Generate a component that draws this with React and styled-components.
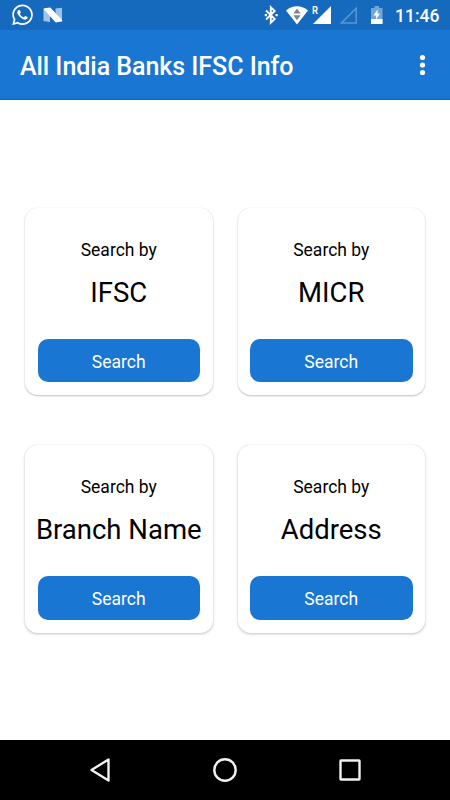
import React from "react";
import styled, { createGlobalStyle } from "styled-components";
import { FaWhatsapp } from "react-icons/fa";

const GlobalStyle = createGlobalStyle`
  * { box-sizing: border-box; }
  body { margin: 0; background: #fff; font-family: Roboto, sans-serif; overflow: hidden; }
`;

const Screen = styled.div`
  width: 450px;
  height: 800px;
  display: flex;
  flex-direction: column;
  background: #fff;
`;

const StatusBar = styled.header`
  height: 30px;
  flex: none;
  display: flex;
  align-items: flex-start;
  padding: 0 10px 0 12px;
  background: #166abd;
  color: #fff;
`;

const StatusIcon = styled.svg`
  display: block;
  flex: none;
  width: ${(p) => p.$w}px;
  height: 30px;
  margin-left: ${(p) => p.$gap || 0}px;
`;

const WhatsApp = styled(FaWhatsapp)`
  display: block;
  flex: none;
  width: 21px;
  height: 23.6px;
  margin-top: 3px;
`;

const Spacer = styled.div`
  flex: 1;
`;

const Clock = styled.time`
  width: 45px;
  font-size: 17.5px;
  font-weight: 500;
  line-height: 30px;
  padding-top: 1px;
  margin-left: 11px;
  white-space: nowrap;
`;

const AppBar = styled.div`
  height: 70px;
  flex: none;
  display: flex;
  align-items: center;
  justify-content: space-between;
  padding: 0 20px;
  background: #1976d2;
  border-bottom: 1px solid #1068c6;
`;

const Title = styled.h1`
  margin: 0;
  padding-top: 5px;
  font-size: 25px;
  line-height: 30px;
  font-weight: 500;
  letter-spacing: -0.04px;
  color: #fff;
  white-space: nowrap;
`;

const MenuButton = styled.button`
  display: flex;
  padding: 0;
  border: 0;
  background: none;
`;

const Main = styled.main`
  flex: 1;
  display: grid;
  grid-template-columns: 187.5px 187.5px;
  grid-auto-rows: 187.5px;
  column-gap: 25px;
  row-gap: 50px;
  justify-content: center;
  padding-top: 107.5px;
`;

const Card = styled.section`
  display: flex;
  flex-direction: column;
  align-items: center;
  padding: 31px 12.5px 13px;
  border-radius: 12.5px;
  background: #fff;
  box-shadow: ${(p) =>
    p.$deep
      ? "0 1px 3px rgba(0,0,0,0.24), 0 0 1px rgba(0,0,0,0.1)"
      : "0 1px 2px rgba(0,0,0,0.24), 0 0 1px rgba(0,0,0,0.12)"};
`;

const Label = styled.span`
  font-size: 17.5px;
  line-height: 22px;
  color: #000;
`;

const Name = styled.h2`
  margin: 15px 0 0;
  font-size: 27.5px;
  line-height: 34px;
  font-weight: 400;
  color: #000;
  white-space: nowrap;
`;

const SearchButton = styled.button`
  width: 162.5px;
  height: 43.5px;
  margin-top: auto;
  padding: 3px 0 0;
  border: 0;
  border-radius: 10px;
  background: #1976d2;
  color: #fff;
  font-family: inherit;
  font-size: 17.5px;
`;

const NavBar = styled.nav`
  height: 60px;
  flex: none;
  display: grid;
  grid-template-columns: repeat(3, 125px);
  justify-content: center;
  align-items: center;
  justify-items: center;
  background: #000;
`;

const NavIcon = styled.svg`
  display: block;
  width: 30px;
  height: 30px;
  fill: none;
  stroke: #f1f1f1;
  stroke-width: 2.4;
  stroke-linejoin: round;
`;

const options = [
  { name: "IFSC" },
  { name: "MICR" },
  { name: "Branch Name", deep: true },
  { name: "Address", deep: true },
];

export default function App() {
  return (
    <>
      <GlobalStyle />
      <Screen>
        <StatusBar>
          <WhatsApp />
          <StatusIcon $w={20} $gap={10} viewBox="43 0 20 30">
            <path d="M43.500 9 50 8v14l-6.500-1zM55.500 8.500l6.500-.8v14l-6.500-1z" fill="#9fc3e7" />
            <path d="M44.500 9 50 8.300 61.500 20.500 56 21.700z" fill="#fff" stroke="#fff" strokeWidth="1.500" strokeLinejoin="round" />
          </StatusIcon>
          <Spacer />
          <StatusIcon $w={14} viewBox="264 0 14 30">
            <path d="M266 10.500l8.700 8.500-3.900 3.700V7.300L274.700 11l-8.700 8.500" fill="none" stroke="#fff" strokeWidth="1.900" />
            <path d="M264.800 14h2.200v2.200h-2.200zM275.500 14h2.200v2.200h-2.200z" fill="#fff" />
          </StatusIcon>
          <StatusIcon $w={23} $gap={8} viewBox="286 0 23 30">
            <path d="M286 10.500Q297 2.200 308 10.500L297 24.500z" fill="#fff" />
            <path d="M293.300 13.500 297 8.500l3.700 5zM293.300 15.200h7.400L297 20.200z" fill="#7c8790" />
          </StatusIcon>
          <StatusIcon $w={19} $gap={3} viewBox="312 0 19 30">
            <path d="M331 6v18h-18z" fill="#fff" />
            <text x="312" y="13.500" fill="#fff" fontSize="10" fontWeight="600" textLength="6" lengthAdjust="spacingAndGlyphs">R</text>
          </StatusIcon>
          <StatusIcon $w={18} $gap={9} viewBox="340 0 18 30">
            <path d="M356.200 8.200v14.900h-14.900z" fill="none" stroke="#5c96d0" strokeWidth="1.500" />
          </StatusIcon>
          <StatusIcon $w={13} $gap={13} viewBox="371 0 13 30">
            <path d="M374.500 6h4.500v2h3.500v16H371V8h3.500z" fill="#73a5d7" />
            <path d="M371 19h11.500v5H371z" fill="#fff" />
            <path d="M377.500 9.500 373.500 15.500h2.500v4l4-6h-2.500z" fill="#fff" />
          </StatusIcon>
          <Clock>11:46</Clock>
        </StatusBar>
        <AppBar>
          <Title>All India Banks IFSC Info</Title>
          <MenuButton aria-label="More options">
            <svg width="15" height="24" viewBox="0 0 15 24" fill="#fff">
              <circle cx="7.500" cy="4.500" r="2.600" />
              <circle cx="7.500" cy="12" r="2.600" />
              <circle cx="7.500" cy="19.500" r="2.600" />
            </svg>
          </MenuButton>
        </AppBar>
        <Main>
          {options.map((o) => (
            <Card key={o.name} $deep={o.deep}>
              <Label>Search by</Label>
              <Name>{o.name}</Name>
              <SearchButton>Search</SearchButton>
            </Card>
          ))}
        </Main>
        <NavBar>
          <NavIcon viewBox="0 0 30 30">
            <path d="M23.500 4.500v21L6.500 15z" />
          </NavIcon>
          <NavIcon viewBox="0 0 30 30">
            <circle cx="15" cy="15" r="10.700" />
          </NavIcon>
          <NavIcon viewBox="0 0 30 30">
            <rect x="5.500" y="5.500" width="19" height="19" rx="0.500" />
          </NavIcon>
        </NavBar>
      </Screen>
    </>
  );
}
